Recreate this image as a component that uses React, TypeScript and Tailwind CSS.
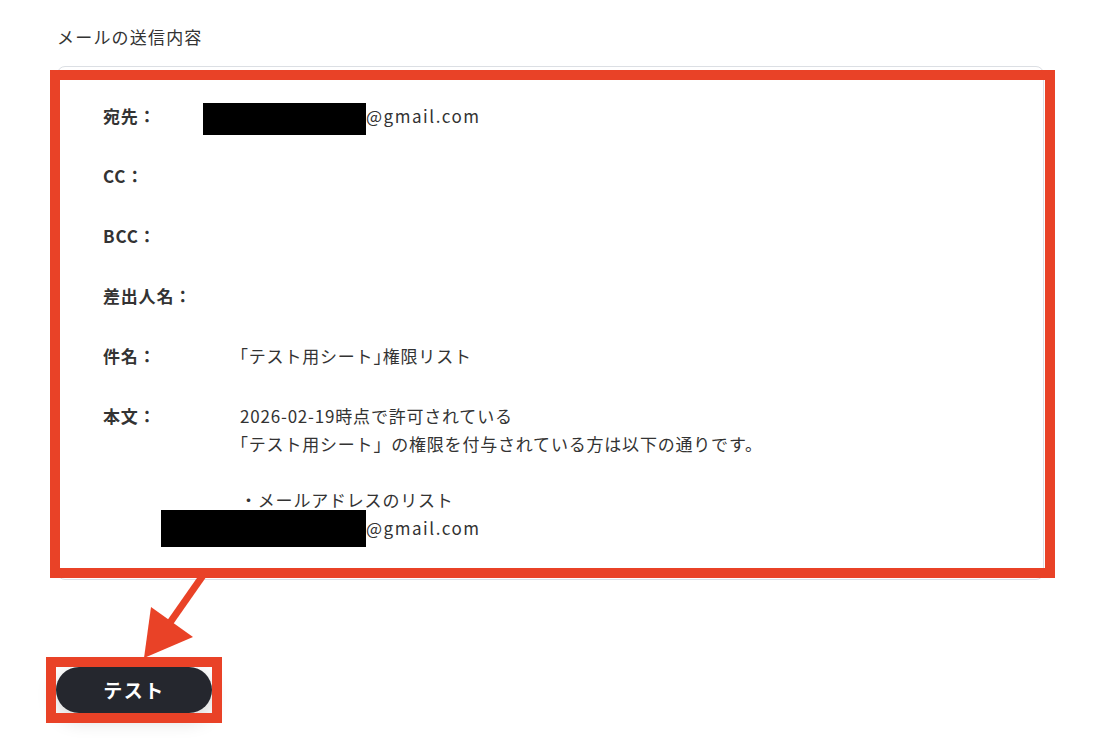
import React from 'react';

const rows = [
  { label: '宛先：', kind: 'to' },
  { label: 'CC：', kind: 'empty' },
  { label: 'BCC：', kind: 'empty' },
  { label: '差出人名：', kind: 'empty' },
  { label: '件名：', kind: 'subject' },
];

export default function App() {
  return (
    <div className="relative w-[1112px] h-[753px] overflow-hidden bg-white text-[#333] font-['Noto_Sans_CJK_JP','Noto_Sans',sans-serif] tracking-[0.05em]">
      <div className="pl-[57px] pr-[68px] pt-[26px]">
        <p className="text-[17px] leading-[22px] tracking-[0.07em]">メールの送信内容</p>

        {/* Mail preview card */}
        <div className="mt-[18px] h-[514px] rounded-lg border border-[#dcdfe4] pl-[45px] pt-[37px] text-[17px]">
          <div className="flex flex-col gap-[36px]">
            {rows.map((r) => (
              <div key={r.label} className="flex h-[24px] items-center">
                <span className="w-[137px] shrink-0 font-bold">{r.label}</span>
                {r.kind === 'to' && (
                  <div className="flex items-start h-[24px]">
                    <span className="-ml-[37px] -mt-[1px] h-[32px] w-[163px] shrink-0 bg-black" />
                    <span className="leading-[24px] tracking-[0.09em]">@gmail.com</span>
                  </div>
                )}
                {r.kind === 'subject' && (
                  <span className="-ml-[9px]">
                    「テスト用シート<span className="tracking-[-0.45em]">」</span>権限リスト
                  </span>
                )}
              </div>
            ))}
          </div>

          <div className="mt-[34px] flex leading-[28px]">
            <span className="w-[137px] shrink-0 font-bold">本文：</span>
            <div className="flex flex-col">
              <span>2026-02-19時点で許可されている</span>
              <span className="-ml-[9px]">「テスト用シート」の権限を付与されている方は以下の通りです。</span>
              <span className="h-[28px]" />
              <span>・メールアドレスのリスト</span>
              <div className="flex h-[28px] items-start">
                <span className="-ml-[79px] -mt-[4px] h-[37px] w-[205px] shrink-0 bg-black" />
                <span className="tracking-[0.09em]">@gmail.com</span>
              </div>
            </div>
          </div>
        </div>

        <button className="-ml-px mt-[87px] flex h-[46px] w-[156px] items-center justify-center rounded-full bg-[#25272e] text-[19px] font-bold text-white tracking-[0.08em] shadow-[0_6px_20px_rgba(0,0,0,0.18)]">
          テスト
        </button>
      </div>

      {/* Annotation overlays */}
      <div className="pointer-events-none absolute left-[50px] top-[70px] h-[508px] w-[1005px] border-[10px] border-[#e94227]" />
      <div className="pointer-events-none absolute left-[46px] top-[657px] h-[66px] w-[176px] border-[10px] border-[#e94227]" />
      <svg className="pointer-events-none absolute left-0 top-0" width="1112" height="753" viewBox="0 0 1112 753">
        <line x1="204" y1="574" x2="169" y2="624" stroke="#e94227" strokeWidth="7" />
        <polygon points="151,607 193,637 144,658" fill="#e94227" />
      </svg>
    </div>
  );
}
